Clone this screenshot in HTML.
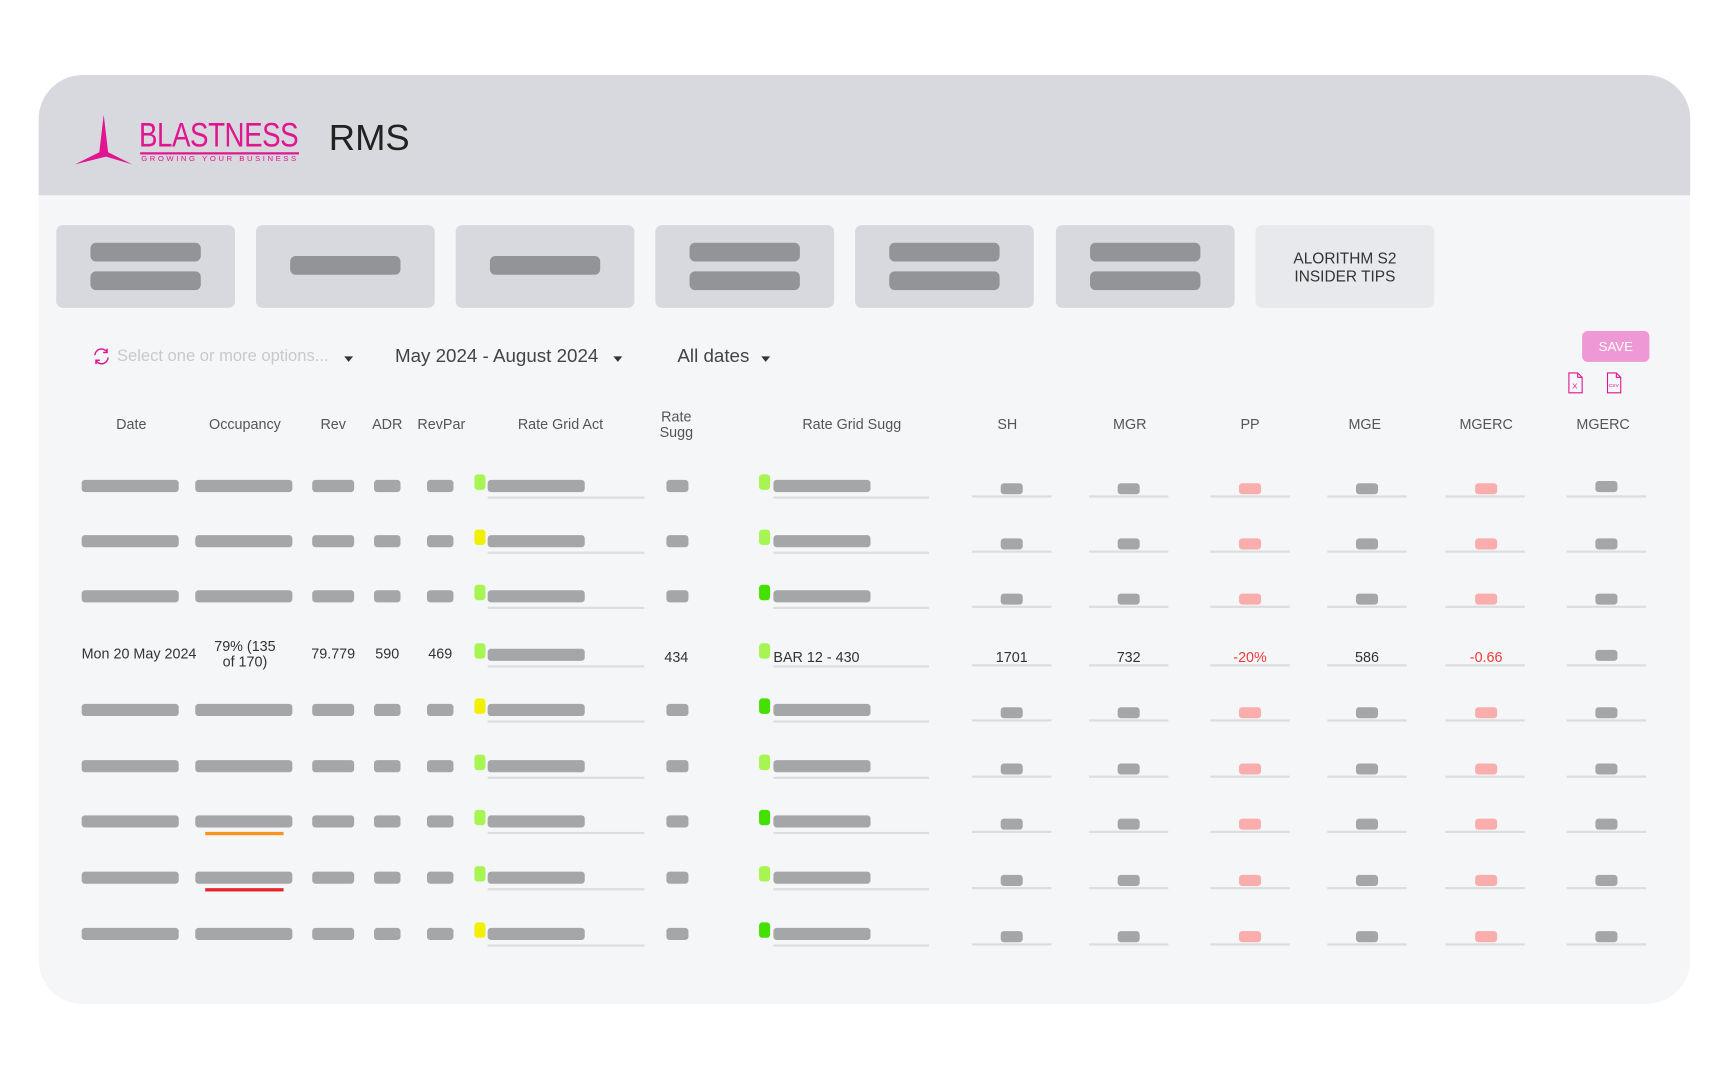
<!DOCTYPE html>
<html><head><meta charset="utf-8"><style>
html,body{margin:0;padding:0;background:#fff;width:1730px;height:1080px;overflow:hidden;font-family:"Liberation Sans",sans-serif}
#s{position:absolute;left:0;top:0;width:1568px;height:979px;transform:scale(1.1033);transform-origin:0 0}
.card{position:absolute;left:35px;top:68px;width:1497px;height:842px;border-radius:40px;background:#f5f6f8;overflow:hidden}
.hdr{position:absolute;left:0;top:0;width:100%;height:109px;background:#d8d9de}
.a{position:absolute}
.tile{position:absolute;top:204px;width:162px;height:75px;background:#d8d9de;border-radius:6px}
.tb{position:absolute;left:31px;width:100px;height:17px;background:#939498;border-radius:5px}
.th{position:absolute;top:385px;font-size:13px;color:#555;transform:translate(-50%,-50%);text-align:center;line-height:14px;white-space:nowrap}
.r{position:absolute;left:0;width:1560px;height:0}
.r>div{position:absolute}
.g{background:#a5a6a8;height:11px;top:-5px;border-radius:3px}
.d{left:74px;width:88px}.o{left:177px;width:88px}.rv{left:283px;width:38px}.ad{left:339px;width:24px}.rp{left:387px;width:24px}
.ba{left:442px;width:88px}.bs{left:701px;width:88px}.rs{left:604px;width:20px}
.ia,.is{width:10px;height:14px;top:-10px;border-radius:3px}.ia{left:430px}.is{left:688px}
.ua,.us,.u{height:2px;top:10px;background:#dcdde0}
.ua{left:442px;width:142px}.us{left:701px;width:141px}
.sm{width:20px;height:10px;top:-2px;border-radius:3px;background:#a5a6a8}
.pk{background:#f9adad}
.u{width:72px;top:9px}
.L{background:#a6f552}.Y{background:#f0f000}.G{background:#44e000}
.t{font-size:13px;color:#333;transform:translate(-50%,-50%);top:0;white-space:nowrap;text-align:center;line-height:14px}
.red{color:#f03a3a}
</style></head><body><div id="s">
<div class="card">
<div class="hdr"></div>
</div>
<!-- logo -->
<svg class="a" style="left:66px;top:102px" width="58" height="50" viewBox="0 0 58 50"><path d="M28 2 L32 36 L54 47 L30 40 L2 47 L24 36 Z" fill="#e0158f"/></svg>
<div class="a" style="left:126px;top:105px;font-size:31px;color:#e0158f;letter-spacing:-0.5px;transform:scaleX(0.81);transform-origin:0 0">BLASTNESS</div>
<div class="a" style="left:127px;top:138px;width:144px;height:1.5px;background:#e0158f"></div>
<div class="a" style="left:128px;top:141px;font-size:7px;color:#e0158f;letter-spacing:2.3px">GROWING YOUR BUSINESS</div>
<div class="a" style="left:298px;top:106px;font-size:33px;color:#222">RMS</div>
<!-- tiles -->
<div class="tile" style="left:51px"><div class="tb" style="top:16px"></div><div class="tb" style="top:42px"></div></div>
<div class="tile" style="left:232px"><div class="tb" style="top:28px"></div></div>
<div class="tile" style="left:413px"><div class="tb" style="top:28px"></div></div>
<div class="tile" style="left:594px"><div class="tb" style="top:16px"></div><div class="tb" style="top:42px"></div></div>
<div class="tile" style="left:775px"><div class="tb" style="top:16px"></div><div class="tb" style="top:42px"></div></div>
<div class="tile" style="left:957px"><div class="tb" style="top:16px"></div><div class="tb" style="top:42px"></div></div>
<div class="tile" style="left:1138px;background:#e8e9ec;font-size:14px;color:#333;text-align:center;line-height:16px;padding-top:22px;box-sizing:border-box">ALORITHM S2<br>INSIDER TIPS</div>
<!-- filters -->
<svg class="a" style="left:83px;top:314px" width="18" height="18" viewBox="0 0 18 18" fill="none" stroke="#e0158f" stroke-width="1.3"><path d="M3 8 A6 6 0 0 1 14 5 M15 10 A6 6 0 0 1 4 13"/><path d="M14 2 V5.5 H10.5 M4 16 V12.5 H7.5"/></svg>
<div class="a" style="left:106px;top:314px;font-size:15px;color:#c8c9cc">Select one or more options...</div>
<div class="a" style="left:312px;top:323px;border:4px solid transparent;border-top:5px solid #333;border-bottom:0"></div>
<div class="a" style="left:358px;top:313px;font-size:17px;color:#444">May 2024 - August 2024</div>
<div class="a" style="left:556px;top:323px;border:4px solid transparent;border-top:5px solid #333;border-bottom:0"></div>
<div class="a" style="left:614px;top:313px;font-size:17px;color:#444">All dates</div>
<div class="a" style="left:690px;top:323px;border:4px solid transparent;border-top:5px solid #333;border-bottom:0"></div>
<div class="a" style="left:1434px;top:300px;width:61px;height:28px;border-radius:5px;background:#ee99d5;color:#fff;font-size:12px;text-align:center;line-height:28px">SAVE</div>
<svg class="a" style="left:1420px;top:337px" width="16" height="20" viewBox="0 0 16 20" fill="none" stroke="#e0158f" stroke-width="1"><path d="M2 1 H10 L14 5 V19 H2 Z M10 1 V5 H14"/><text x="5" y="15" font-size="7" fill="#e0158f" stroke="none" font-family="Liberation Sans">X</text></svg>
<svg class="a" style="left:1455px;top:337px" width="16" height="20" viewBox="0 0 16 20" fill="none" stroke="#e0158f" stroke-width="1"><path d="M2 1 H10 L14 5 V19 H2 Z M10 1 V5 H14"/><text x="3" y="14" font-size="4.5" fill="#e0158f" stroke="none" font-family="Liberation Sans">CSV</text></svg>
<!-- headers -->
<div class="th" style="left:119px">Date</div>
<div class="th" style="left:222px">Occupancy</div>
<div class="th" style="left:302px">Rev</div>
<div class="th" style="left:351px">ADR</div>
<div class="th" style="left:400px">RevPar</div>
<div class="th" style="left:508px">Rate Grid Act</div>
<div class="th" style="left:613px">Rate<br>Sugg</div>
<div class="th" style="left:772px">Rate Grid Sugg</div>
<div class="th" style="left:913px">SH</div>
<div class="th" style="left:1024px">MGR</div>
<div class="th" style="left:1133px">PP</div>
<div class="th" style="left:1237px">MGE</div>
<div class="th" style="left:1347px">MGERC</div>
<div class="th" style="left:1453px">MGERC</div>

<div class="r" style="top:440px"><div class="g d"></div><div class="g o"></div><div class="g rv"></div><div class="g ad"></div><div class="g rp"></div><div class="ia L"></div><div class="g ba"></div><div class="ua"></div><div class="g rs"></div><div class="is L"></div><div class="g bs"></div><div class="us"></div>
<div class="sm" style="left:907px"></div><div class="u" style="left:881px"></div><div class="sm" style="left:1013px"></div><div class="u" style="left:987px"></div><div class="sm pk" style="left:1123px"></div><div class="u" style="left:1097px"></div><div class="sm" style="left:1229px"></div><div class="u" style="left:1203px"></div><div class="sm pk" style="left:1337px"></div><div class="u" style="left:1310px"></div><div class="sm" style="left:1446px;top:-4px"></div><div class="u" style="left:1420px"></div></div>

<div class="r" style="top:490px"><div class="g d"></div><div class="g o"></div><div class="g rv"></div><div class="g ad"></div><div class="g rp"></div><div class="ia Y"></div><div class="g ba"></div><div class="ua"></div><div class="g rs"></div><div class="is L"></div><div class="g bs"></div><div class="us"></div>
<div class="sm" style="left:907px"></div><div class="u" style="left:881px"></div><div class="sm" style="left:1013px"></div><div class="u" style="left:987px"></div><div class="sm pk" style="left:1123px"></div><div class="u" style="left:1097px"></div><div class="sm" style="left:1229px"></div><div class="u" style="left:1203px"></div><div class="sm pk" style="left:1337px"></div><div class="u" style="left:1310px"></div><div class="sm" style="left:1446px"></div><div class="u" style="left:1420px"></div></div>

<div class="r" style="top:540px"><div class="g d"></div><div class="g o"></div><div class="g rv"></div><div class="g ad"></div><div class="g rp"></div><div class="ia L"></div><div class="g ba"></div><div class="ua"></div><div class="g rs"></div><div class="is G"></div><div class="g bs"></div><div class="us"></div>
<div class="sm" style="left:907px"></div><div class="u" style="left:881px"></div><div class="sm" style="left:1013px"></div><div class="u" style="left:987px"></div><div class="sm pk" style="left:1123px"></div><div class="u" style="left:1097px"></div><div class="sm" style="left:1229px"></div><div class="u" style="left:1203px"></div><div class="sm pk" style="left:1337px"></div><div class="u" style="left:1310px"></div><div class="sm" style="left:1446px"></div><div class="u" style="left:1420px"></div></div>

<div class="r" style="top:593px">
<div class="t" style="left:126px">Mon 20 May 2024</div><div class="t" style="left:222px">79% (135<br>of 170)</div><div class="t" style="left:302px">79.779</div><div class="t" style="left:351px">590</div><div class="t" style="left:399px">469</div>
<div class="ia L"></div><div class="g ba"></div><div class="ua"></div><div class="t" style="left:613px;top:3px">434</div><div class="is L"></div><div class="t" style="left:701px;top:3px;transform:translateY(-50%)">BAR 12 - 430</div><div class="us"></div>
<div class="t" style="left:917px;top:3px">1701</div><div class="u" style="left:881px"></div><div class="t" style="left:1023px;top:3px">732</div><div class="u" style="left:987px"></div><div class="t red" style="left:1133px;top:3px">-20%</div><div class="u" style="left:1097px"></div><div class="t" style="left:1239px;top:3px">586</div><div class="u" style="left:1203px"></div><div class="t red" style="left:1347px;top:3px">-0.66</div><div class="u" style="left:1310px"></div><div class="sm" style="left:1446px;top:-4px"></div><div class="u" style="left:1420px"></div></div>

<div class="r" style="top:643px"><div class="g d"></div><div class="g o"></div><div class="g rv"></div><div class="g ad"></div><div class="g rp"></div><div class="ia Y"></div><div class="g ba"></div><div class="ua"></div><div class="g rs"></div><div class="is G"></div><div class="g bs"></div><div class="us"></div>
<div class="sm" style="left:907px"></div><div class="u" style="left:881px"></div><div class="sm" style="left:1013px"></div><div class="u" style="left:987px"></div><div class="sm pk" style="left:1123px"></div><div class="u" style="left:1097px"></div><div class="sm" style="left:1229px"></div><div class="u" style="left:1203px"></div><div class="sm pk" style="left:1337px"></div><div class="u" style="left:1310px"></div><div class="sm" style="left:1446px"></div><div class="u" style="left:1420px"></div></div>

<div class="r" style="top:694px"><div class="g d"></div><div class="g o"></div><div class="g rv"></div><div class="g ad"></div><div class="g rp"></div><div class="ia L"></div><div class="g ba"></div><div class="ua"></div><div class="g rs"></div><div class="is L"></div><div class="g bs"></div><div class="us"></div>
<div class="sm" style="left:907px"></div><div class="u" style="left:881px"></div><div class="sm" style="left:1013px"></div><div class="u" style="left:987px"></div><div class="sm pk" style="left:1123px"></div><div class="u" style="left:1097px"></div><div class="sm" style="left:1229px"></div><div class="u" style="left:1203px"></div><div class="sm pk" style="left:1337px"></div><div class="u" style="left:1310px"></div><div class="sm" style="left:1446px"></div><div class="u" style="left:1420px"></div></div>

<div class="r" style="top:744px"><div class="g d"></div><div class="g o"></div><div class="g rv"></div><div class="g ad"></div><div class="g rp"></div><div class="ia L"></div><div class="g ba"></div><div class="ua"></div><div class="g rs"></div><div class="is G"></div><div class="g bs"></div><div class="us"></div>
<div style="left:186px;width:71px;height:3px;top:10px;background:#f7941d"></div>
<div class="sm" style="left:907px"></div><div class="u" style="left:881px"></div><div class="sm" style="left:1013px"></div><div class="u" style="left:987px"></div><div class="sm pk" style="left:1123px"></div><div class="u" style="left:1097px"></div><div class="sm" style="left:1229px"></div><div class="u" style="left:1203px"></div><div class="sm pk" style="left:1337px"></div><div class="u" style="left:1310px"></div><div class="sm" style="left:1446px"></div><div class="u" style="left:1420px"></div></div>

<div class="r" style="top:795px"><div class="g d"></div><div class="g o"></div><div class="g rv"></div><div class="g ad"></div><div class="g rp"></div><div class="ia L"></div><div class="g ba"></div><div class="ua"></div><div class="g rs"></div><div class="is L"></div><div class="g bs"></div><div class="us"></div>
<div style="left:186px;width:71px;height:3px;top:10px;background:#e8262a"></div>
<div class="sm" style="left:907px"></div><div class="u" style="left:881px"></div><div class="sm" style="left:1013px"></div><div class="u" style="left:987px"></div><div class="sm pk" style="left:1123px"></div><div class="u" style="left:1097px"></div><div class="sm" style="left:1229px"></div><div class="u" style="left:1203px"></div><div class="sm pk" style="left:1337px"></div><div class="u" style="left:1310px"></div><div class="sm" style="left:1446px"></div><div class="u" style="left:1420px"></div></div>

<div class="r" style="top:846px"><div class="g d"></div><div class="g o"></div><div class="g rv"></div><div class="g ad"></div><div class="g rp"></div><div class="ia Y"></div><div class="g ba"></div><div class="ua"></div><div class="g rs"></div><div class="is G"></div><div class="g bs"></div><div class="us"></div>
<div class="sm" style="left:907px"></div><div class="u" style="left:881px"></div><div class="sm" style="left:1013px"></div><div class="u" style="left:987px"></div><div class="sm pk" style="left:1123px"></div><div class="u" style="left:1097px"></div><div class="sm" style="left:1229px"></div><div class="u" style="left:1203px"></div><div class="sm pk" style="left:1337px"></div><div class="u" style="left:1310px"></div><div class="sm" style="left:1446px"></div><div class="u" style="left:1420px"></div></div>
</div></body></html>
